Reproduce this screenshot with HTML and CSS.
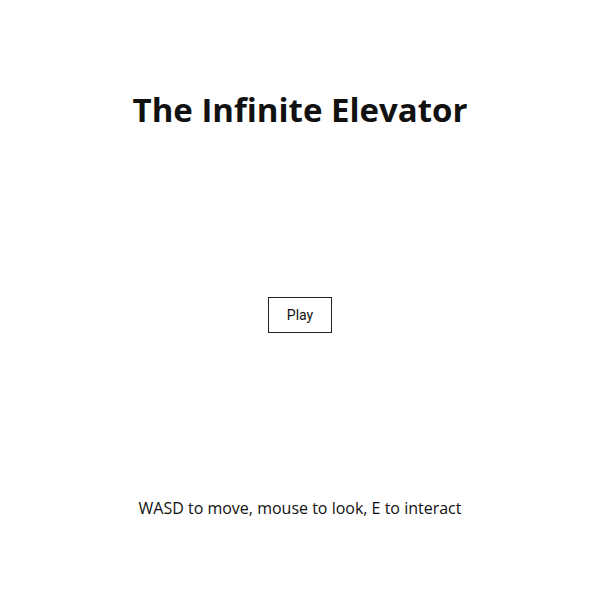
FILE: index.html
```html
<!DOCTYPE html>
<html lang="en">
<head>
  <meta charset="UTF-8" />
  <meta name="viewport" content="width=device-width, initial-scale=1.0" />
  <title>The Infinite Elevator</title>
  <link rel="stylesheet" href="styles.css">
</head>
<body>
  <div class="menu">
    <h1>The Infinite Elevator</h1>
    <button id="play" type="button">Play</button>
    <p class="controls">WASD to move, mouse to look, E to interact</p>
  </div>
</body>
</html>
```

FILE: styles.css
```css
body {
  margin: 0;
  font-family: "Open Sans", sans-serif;
  background: #fff;
  color: #111;
}
.menu {
  box-sizing: border-box;
  height: 100vh;
  display: flex;
  flex-direction: column;
  align-items: center;
  justify-content: space-between;
  padding: 88px 0 80px;
}
h1 {
  margin: 0;
  font-size: 33px;
  line-height: 44px;
  font-weight: 700;
}
button {
  font-family: Roboto, sans-serif;
  font-size: 14px;
  line-height: 16px;
  padding: 9px 18px;
  margin-top: 2px;
  background: #fff;
  color: #111;
  border: 1px solid #222;
  cursor: pointer;
}
.controls {
  margin: 0;
  font-size: 16px;
  line-height: 24px;
}
```
